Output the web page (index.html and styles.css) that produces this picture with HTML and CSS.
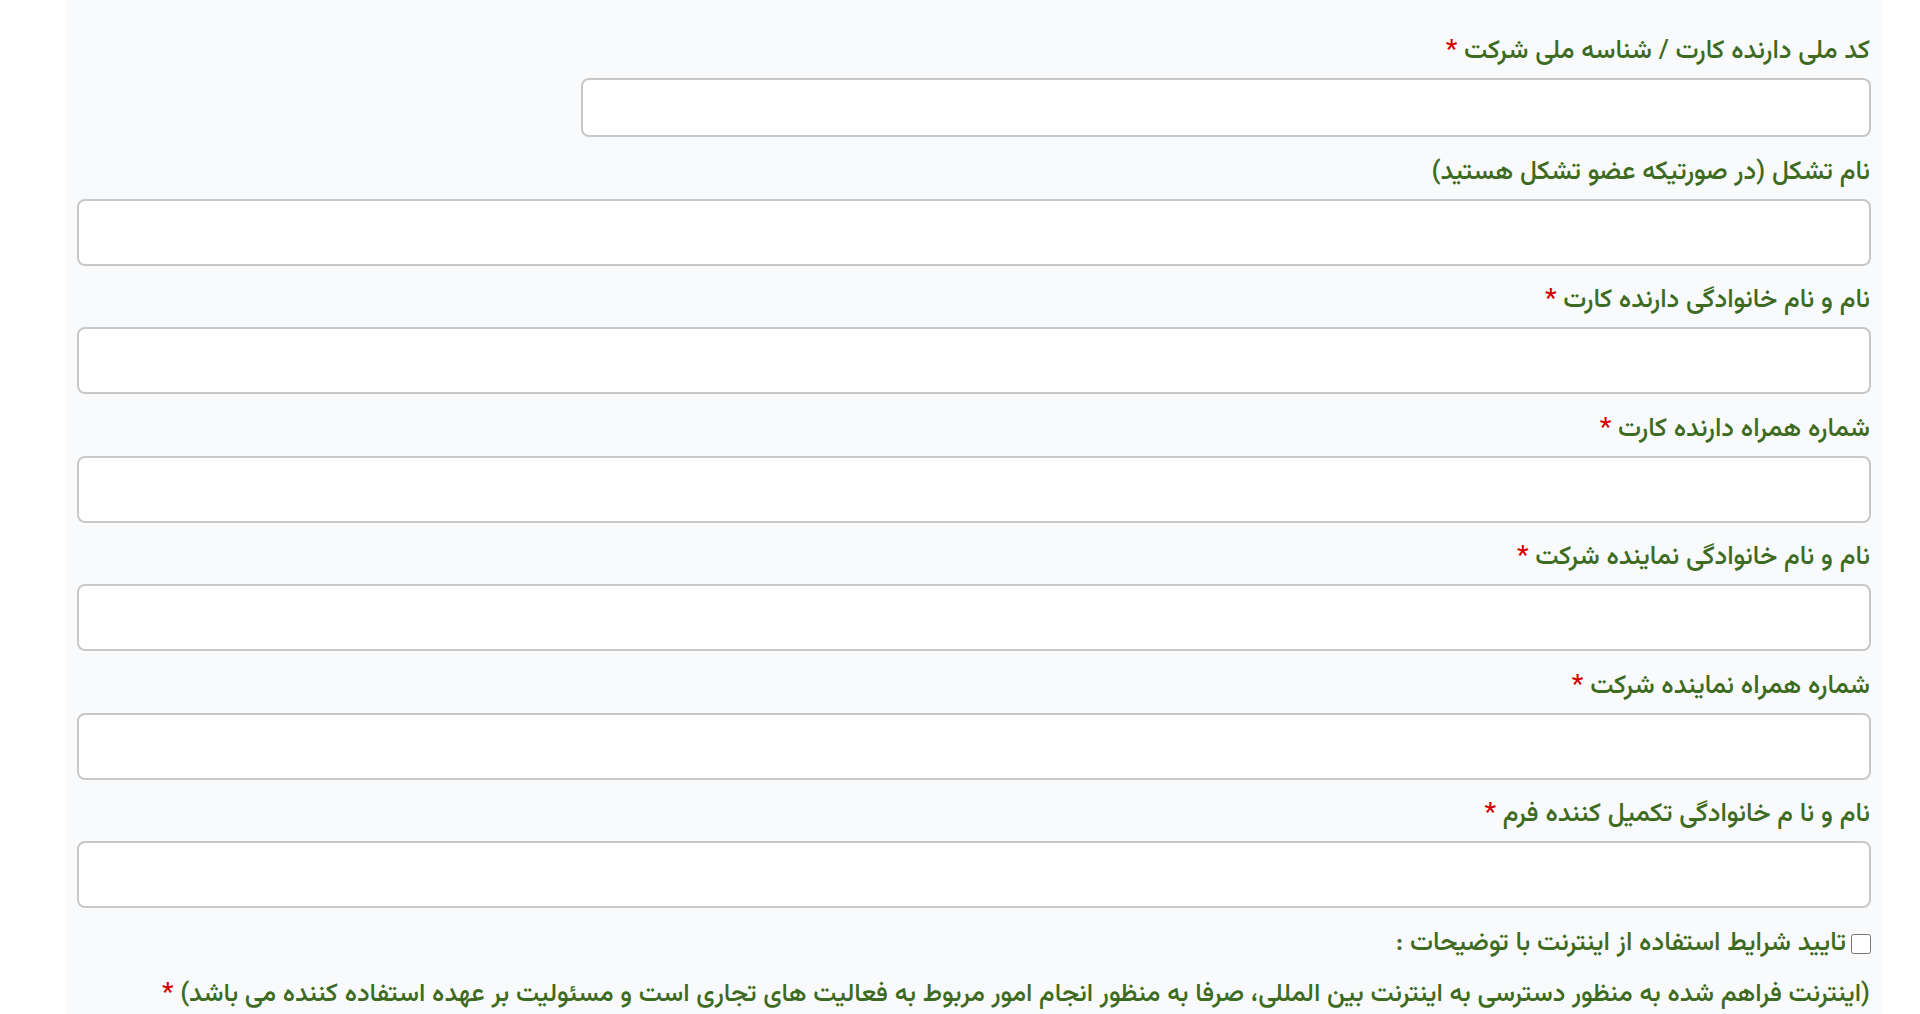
FILE: index.html
```html
<!DOCTYPE html>
<html lang="fa" dir="rtl">
<head>
<meta charset="utf-8">
<title>فرم</title>
<link rel="stylesheet" href="styles.css">
</head>
<body>
<div class="panel">
  <form class="form">
    <div class="field">
      <label class="label">کد ملی دارنده کارت / شناسه ملی شرکت <span class="req">*</span></label>
      <input class="input input-short" type="text">
    </div>
    <div class="field">
      <label class="label">نام تشکل (در صورتیکه عضو تشکل هستید)</label>
      <input class="input" type="text">
    </div>
    <div class="field">
      <label class="label">نام و نام خانوادگی دارنده کارت <span class="req">*</span></label>
      <input class="input" type="text">
    </div>
    <div class="field">
      <label class="label">شماره همراه دارنده کارت <span class="req">*</span></label>
      <input class="input" type="text">
    </div>
    <div class="field">
      <label class="label">نام و نام خانوادگی نماینده شرکت <span class="req">*</span></label>
      <input class="input" type="text">
    </div>
    <div class="field">
      <label class="label">شماره همراه نماینده شرکت <span class="req">*</span></label>
      <input class="input" type="text">
    </div>
    <div class="field">
      <label class="label">نام و نا م خانوادگی تکمیل کننده فرم <span class="req">*</span></label>
      <input class="input" type="text">
    </div>
    <div class="check-row">
      <input class="check" type="checkbox" id="agree">
      <label class="label" for="agree">تایید شرایط استفاده از اینترنت با توضیحات :</label>
    </div>
    <p class="note">(اینترنت فراهم شده به منظور دسترسی به اینترنت بین المللی، صرفا به منظور انجام امور مربوط به فعالیت های تجاری است و مسئولیت بر عهده استفاده کننده می باشد) <span class="req">*</span></p>
  </form>
</div>
</body>
</html>
```
FILE: styles.css
```css
html, body {
  margin: 0;
  padding: 0;
  background: #ffffff;
}
body {
  font-family: "Vazirmatn", "Noto Sans Arabic", "DejaVu Sans", sans-serif;
  direction: rtl;
}
.panel {
  margin: 0 38px 0 66px;
  background: #f9fafc;
  padding: 34px 11px 40px 11px;
  min-height: 1014px;
  box-sizing: border-box;
}
.form {
  display: flex;
  flex-direction: column;
}
.field {
  display: flex;
  flex-direction: column;
  align-items: flex-start;
  margin-bottom: 17.5px;
}
.label {
  font-size: 26px;
  font-weight: 500;
  line-height: 36px;
  color: #3d6b21;
  margin-bottom: 8px;
  padding-right: 1px;
}
.req {
  color: #d60000;
}
.input {
  width: 100%;
  height: 67px;
  box-sizing: border-box;
  border: 2px solid #c8c8c8;
  border-radius: 8px;
  background: #ffffff;
  margin: 0;
}
.input-short {
  width: 71.9%;
  height: 59px;
}
.check-row {
  display: flex;
  align-items: center;
  margin-top: 0;
}
.check-row .label {
  margin-bottom: 0;
}
.check {
  width: 20px;
  height: 20px;
  margin: 0 0 0 4px;
}
.note {
  margin: 15px 0 0 0;
  font-size: 25.8px;
  font-weight: 500;
  line-height: 36px;
  color: #3d6b21;
  padding-right: 1px;
}
```
